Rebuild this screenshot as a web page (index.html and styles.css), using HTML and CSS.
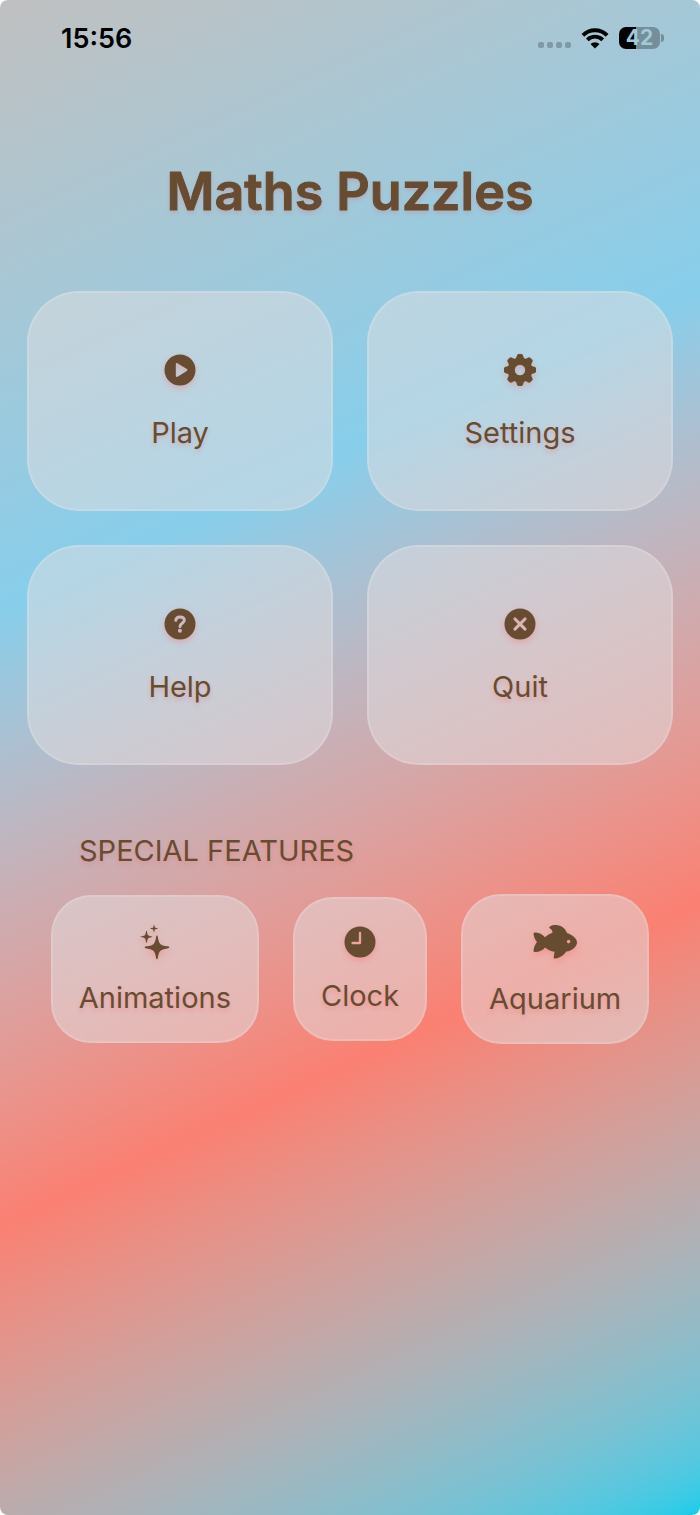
FILE: index.html
```html
<!DOCTYPE html>
<html lang="en">
<head>
<meta charset="utf-8">
<meta name="viewport" content="width=device-width, initial-scale=1">
<title>Maths Puzzles</title>
<link rel="stylesheet" href="styles.css">
</head>
<body>
<div class="app">
  <header class="status">
    <time class="status-time">15:56</time>
    <div class="status-icons">
      <span class="signal" aria-hidden="true"><i></i><i></i><i></i><i></i></span>
      <svg class="wifi" viewBox="0 0 28 22" aria-hidden="true">
        <path d="M1.900 8.300a17 17 0 0 1 24.200 0M6.300 12.800a10.900 10.900 0 0 1 15.400 0" fill="none" stroke="#000" stroke-width="3.900"/>
        <path d="M14 21.500l-4.500-4.500a6.400 6.400 0 0 1 9 0z"/>
      </svg>
      <div class="battery"><span class="battery-level">42</span><i class="battery-cap"></i></div>
    </div>
  </header>

  <main class="main">
    <h1 class="title">Maths Puzzles</h1>

    <div class="menu">
      <button class="card tile" type="button">
        <svg class="icon" viewBox="0 0 32 32" aria-hidden="true"><path fill-rule="evenodd" d="M16 .5a15.5 15.5 0 1 1 0 31a15.5 15.5 0 1 1 0-31zM11.8 10.2v11.6c0 1 .8 1.4 1.7.9l9.4-5.7c.8-.5.8-1.5 0-2l-9.400-5.700c-.9-.5-1.700-.1-1.700.9z"/></svg>
        <span class="label">Play</span>
      </button>
      <button class="card tile" type="button">
        <svg class="icon" viewBox="-16 -16 32 32" aria-hidden="true">
          <circle r="8.800" fill="none" stroke="currentColor" stroke-width="7.200"/>
          <g id="teeth">
            <path id="tooth" d="M-4.300-11L-2.900-14.800Q-2.600-16-1.400-16H1.400Q2.600-16 2.900-14.800L4.300-11z"/>
            <use href="#tooth" transform="rotate(45)"/>
            <use href="#tooth" transform="rotate(90)"/>
            <use href="#tooth" transform="rotate(135)"/>
          </g>
          <use href="#teeth" transform="rotate(180)"/>
        </svg>
        <span class="label">Settings</span>
      </button>
      <button class="card tile" type="button">
        <svg class="icon" viewBox="0 0 32 32" aria-hidden="true">
          <mask id="help-mask"><rect width="32" height="32" fill="#fff"/><path d="M11.800 12.300C12 9.800 13.700 8.900 16 8.900C18.600 8.900 20.300 10.200 20.300 12.300C20.300 15.300 16 15.200 16 18.500" fill="none" stroke="#000" stroke-width="3" stroke-linecap="round" stroke-linejoin="round"/><circle cx="15.900" cy="22.700" r="2" fill="#000"/></mask>
          <circle cx="16" cy="16" r="15.500" mask="url(#help-mask)"/>
        </svg>
        <span class="label">Help</span>
      </button>
      <button class="card tile" type="button">
        <svg class="icon" viewBox="0 0 32 32" aria-hidden="true">
          <mask id="quit-mask"><rect width="32" height="32" fill="#fff"/><path d="M10.900 10.900L21.100 21.100M21.100 10.900L10.900 21.100" stroke="#000" stroke-width="2.900" stroke-linecap="round"/></mask>
          <circle cx="16" cy="16" r="15.500" mask="url(#quit-mask)"/>
        </svg>
        <span class="label">Quit</span>
      </button>
    </div>

    <section class="special">
      <h2 class="heading">SPECIAL FEATURES</h2>
      <div class="features">
        <button class="card feature" type="button">
          <svg class="icon icon-sparkles" viewBox="0 0 30 36" aria-hidden="true">
            <path d="M17 11.500C17.700 11.500 17.700 12 17.900 13.200C18.900 19.800 20 21.300 27.300 22.300C28.700 22.500 29.300 22.600 29.300 23.300S28.700 24.200 27.300 24.400C20 25.500 18.900 27 17.900 33.600C17.700 34.800 17.700 35.300 17 35.300S16.200 34.800 16 33.600C15 27 13.900 25.500 6.700 24.400C5.300 24.200 4.700 24 4.700 23.300S5.300 22.500 6.700 22.300C13.900 21.300 15 19.800 16 13.200C16.200 12 16.300 11.500 17 11.500z"/>
            <path d="M6.500 6.800c.7 0 .5 3.300 1.600 4.400s4.200.8 4.200 1.600s-3.200.5-4.200 1.600s-.9 4.300-1.600 4.300s-.500-3.200-1.600-4.300s-4.300-.8-4.300-1.600s3.200-.500 4.300-1.600s.9-4.400 1.600-4.400z"/>
            <path d="M14 .7c.5 0 .4 2.200 1 2.900s2.900.4 2.900 1s-2.200.3-2.900 1s-.5 2.800-1 2.800s-.3-2.200-1-2.800s-2.800-.5-2.800-1s2.100-.3 2.800-1s.5-2.900 1-2.900z"/>
          </svg>
          <span class="label">Animations</span>
        </button>
        <button class="card feature" type="button">
          <svg class="icon" viewBox="0 0 32 32" aria-hidden="true">
            <mask id="clock-mask"><rect width="32" height="32" fill="#fff"/><path d="M16 7V17H8.500" fill="none" stroke="#000" stroke-width="2.300" stroke-linecap="round" stroke-linejoin="round"/></mask>
            <circle cx="16" cy="16" r="15.500" mask="url(#clock-mask)"/>
          </svg>
          <span class="label">Clock</span>
        </button>
        <button class="card feature" type="button">
          <svg class="icon icon-fish" viewBox="0 0 44 38" aria-hidden="true">
            <path fill-rule="evenodd" d="M17 5.500C15.800 4.800 16.200 3.900 17.200 3.200C22 .9 31 1.800 34 10C39.500 12 44 15.300 44 19.500C44 23.500 39 28 33.300 28.600C31 32 26.500 35.400 22.300 35.500C20.800 35.600 20.500 34.900 20.800 33.600L21.600 28.800C17.500 28.100 14.800 26.800 12 24.500C9.700 27.600 5 29.300 1.600 28.900C.5 28.800.4 28 .6 26.900C1 24 2.200 21.500 4 19C2.300 16.800 1 14.200.6 11.400C.4 10.200.6 9.500 1.600 9.400C5 9.200 9.600 11 12 14.300C14.300 12.300 17 10.700 19.600 9.800C19.400 7.800 18.600 6.500 17 5.500zM35.600 16.800a1.800 1.800 0 1 0 0 3.600a1.800 1.800 0 1 0 0-3.600z"/>
          </svg>
          <span class="label">Aquarium</span>
        </button>
      </div>
    </section>
  </main>
</div>
</body>
</html>
```
FILE: styles.css
```css
* { box-sizing: border-box; }

body {
  margin: 0;
  background: #fff;
  color: #674c31;
  font-family: Inter, "Liberation Sans", sans-serif;
}

.app {
  min-height: 100vh;
  border-radius: 8px;
  background: linear-gradient(155.2deg in oklab, #c0c0c0, #87ceeb 33.33%, #fa8072 66.67%, #10cdea);
}

.status {
  display: flex;
  justify-content: space-between;
  align-items: center;
  height: 76px;
  padding: 0 36px 0 61px;
  color: #000;
}

.status-time {
  font-size: 27px;
  font-weight: 600;
}

.status-icons {
  display: flex;
  align-items: center;
  gap: 10px;
}

.signal {
  display: flex;
  gap: 3px;
  padding-top: 14px;
}

.signal i {
  width: 6px;
  height: 6px;
  border-radius: 2px;
  background: #8099a6;
}

.wifi {
  width: 28px;
  height: 22px;
}

.battery {
  display: flex;
  align-items: center;
  gap: 1px;
}

.battery-level {
  width: 41px;
  border-radius: 7px;
  background: linear-gradient(90deg, #000 42%, #748e9a 42%);
  color: #a2c8d9;
  font-size: 21px;
  font-weight: 700;
  line-height: 22px;
  text-align: center;
}

.battery-cap {
  width: 3px;
  height: 8px;
  border-radius: 0 4px 4px 0;
  background: #748e9a;
}

.main {
  padding: 84px 27px 0;
}

.title {
  margin: 0;
  font-size: 52px;
  font-weight: 600;
  line-height: 64px;
  text-align: center;
  -webkit-text-stroke: 1px #674c31;
  text-shadow: 0 3px 4px rgba(220, 110, 120, 0.3);
}

.menu {
  display: grid;
  grid-template-columns: 1fr 1fr;
  gap: 34px;
  margin-top: 67px;
}

.card {
  display: flex;
  flex-direction: column;
  align-items: center;
  border: 2px solid rgba(255, 255, 255, 0.15);
  background: rgba(226, 222, 223, 0.5);
  color: inherit;
  font: inherit;
  cursor: pointer;
}

.tile {
  gap: 29px;
  padding: 61px 26px 58px;
  border-radius: 52px;
}

.feature {
  gap: 20px;
  padding: 27px 26px 25px;
  border-radius: 40px;
}

.icon {
  width: 32px;
  height: 32px;
  fill: currentColor;
  filter: drop-shadow(0 3px 3px rgba(255, 90, 90, 0.3));
}

.icon-sparkles {
  width: 30px;
  height: 36px;
}

.icon-fish {
  width: 44px;
  height: 38px;
}

.label {
  font-size: 29px;
  font-weight: 400;
  line-height: 36px;
  text-shadow: 0 3px 4px rgba(240, 100, 100, 0.3);
}

.special {
  margin-top: 68px;
}

.heading {
  margin: 0;
  padding-left: 52px;
  font-size: 29px;
  font-weight: 400;
  line-height: 36px;
  text-shadow: 0 3px 4px rgba(240, 100, 100, 0.3);
}

.features {
  display: flex;
  justify-content: center;
  align-items: center;
  gap: 34px;
  margin-top: 25px;
}
```
